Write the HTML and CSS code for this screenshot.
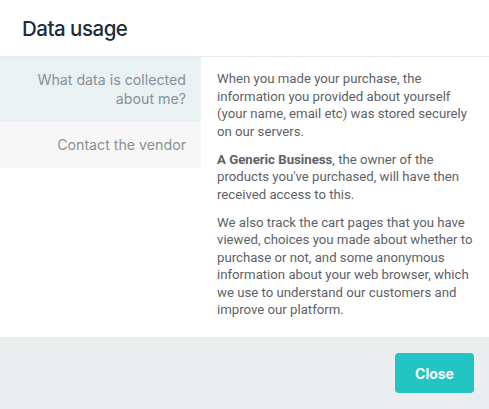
FILE: index.html
```html
<!DOCTYPE html>
<html>
<head>
<meta charset="utf-8">
<link rel="stylesheet" href="styles.css">
</head>
<body>
<div class="modal">
  <header class="head"><h1 class="title">Data usage</h1></header>
  <div class="body">
    <nav class="side">
      <div class="tab active">What data is collected about me?</div>
      <div class="tab">Contact the vendor</div>
    </nav>
    <div class="content">
      <p>When you made your purchase, the information you provided about yourself (your name, email etc) was stored securely on our servers.</p>
      <p><strong>A Generic Business</strong>, the owner of the products you've purchased, will have then received access to this.</p>
      <p>We also track the cart pages that you have viewed, choices you made about whether to purchase or not, and some anonymous information about your web browser, which we use to understand our customers and improve our platform.</p>
    </div>
  </div>
  <footer class="foot"><button class="close">Close</button></footer>
</div>
</body>
</html>
```
FILE: styles.css
```css
html, body { margin: 0; padding: 0; background: #fff; }
body { font-family: "Inter", "Liberation Sans", sans-serif; width: 489px; height: 409px; overflow: hidden; }
.modal { display: flex; flex-direction: column; height: 409px; }
.head { height: 57px; border-bottom: 1px solid #e8ecee; display: flex; align-items: center; padding: 0 22px; box-sizing: border-box; }
.title { margin: 0; font-size: 20.5px; font-weight: 500; color: #1b2b3c; letter-spacing: -0.5px; }
.body { display: flex; flex: 1; }
.side { width: 201px; flex: none; }
.tab { text-align: right; padding: 13px 15px 14px 30px; font-size: 14.2px; line-height: 19px; color: #8a9096; background: #f7f7f7; }
.tab.active { background: #e9f1f3; }
.content { flex: 1; padding: 13px 12px 0 16px; color: #5d6267; font-family: "Roboto", "Liberation Sans", sans-serif; font-size: 13.2px; line-height: 17.5px; }
.content p { margin: 0 0 10.5px; }
.content strong { font-weight: 700; color: #5d6267; }
.foot { height: 72px; background: #ebeeef; display: flex; align-items: center; justify-content: flex-end; padding: 0 15px; }
.close { width: 79px; height: 40px; border: 0; border-radius: 4px; background: #22c4c4; color: #fff; font-family: inherit; font-size: 14px; font-weight: 700; }
```
